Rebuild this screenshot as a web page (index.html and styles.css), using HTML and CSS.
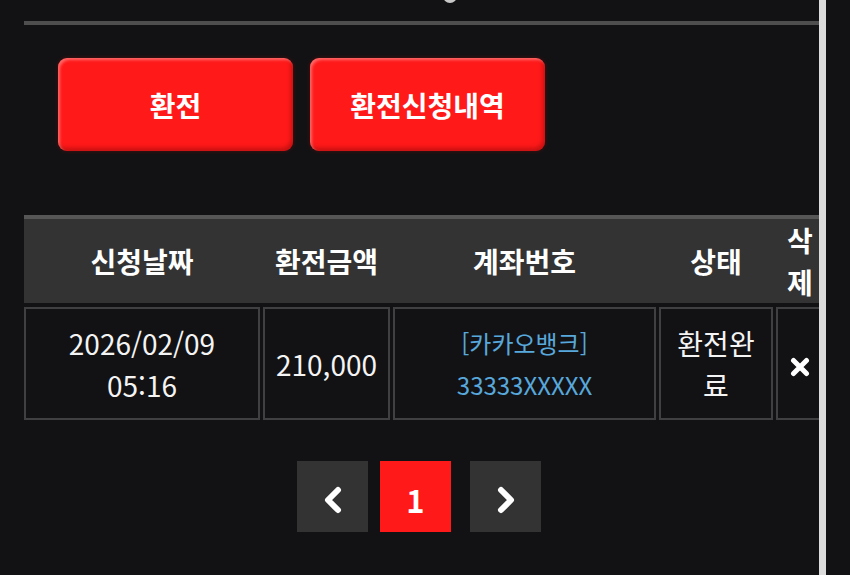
FILE: index.html
```html
<!DOCTYPE html>
<html lang="ko">
<head>
  <meta charset="UTF-8" />
  <meta name="viewport" content="width=device-width, initial-scale=1.0"/>
  <title>환전신청내역</title>
  <link rel="stylesheet" href="styles.css">
</head>
<body>

  <div class="panel">
    <div class="top-icon"></div>
    <div class="rule"></div>

    <div class="tabs">
      <button class="tab">환전</button>
      <button class="tab">환전신청내역</button>
    </div>

    <div class="history">
      <div class="row head">
        <div class="cell">신청날짜</div>
        <div class="cell">환전금액</div>
        <div class="cell">계좌번호</div>
        <div class="cell">상태</div>
        <div class="cell">삭제</div>
      </div>
      <div class="row body">
        <div class="cell">2026/02/09<br>05:16</div>
        <div class="cell">210,000</div>
        <div class="cell account">[카카오뱅크]<br>33333XXXXX</div>
        <div class="cell">환전완료</div>
        <div class="cell del">
          <svg width="20" height="20" viewBox="0 0 20 20">
            <path d="M3.5 3.5 L16.5 16.5 M16.5 3.5 L3.5 16.5" stroke="#fff" stroke-width="5" stroke-linecap="round"/>
          </svg>
        </div>
      </div>
    </div>

    <div class="pager">
      <a class="page">
        <svg width="22" height="28" viewBox="0 0 22 28">
          <polyline points="16,4 6,14 16,24" fill="none" stroke="#fff" stroke-width="6" stroke-linejoin="round" stroke-linecap="round"/>
        </svg>
      </a>
      <a class="page current">1</a>
      <a class="page next">
        <svg width="22" height="28" viewBox="0 0 22 28">
          <polyline points="6,4 16,14 6,24" fill="none" stroke="#fff" stroke-width="6" stroke-linejoin="round" stroke-linecap="round"/>
        </svg>
      </a>
    </div>
  </div>

  <div class="edge"></div>

</body>
</html>
```

FILE: styles.css
```css
body {
  margin: 0;
  background: #121214;
  font-family: "Noto Sans CJK KR", "Noto Sans", sans-serif;
  color: #fff;
  display: flex;
  height: 575px;
  overflow: hidden;
}
.panel {
  width: 819px;
  flex: none;
  overflow: hidden;
}
.edge {
  width: 7px;
  flex: none;
  background: #dcdcdc;
}
.top-icon {
  width: 14px;
  height: 14px;
  border-radius: 50%;
  background: #c8c8c8;
  margin: -11px 0 0 443px;
}
.rule {
  height: 4px;
  background: #4e4e4e;
  margin: 18px 0 0 24px;
}
.tabs {
  display: flex;
  gap: 17px;
  padding: 33px 0 0 58px;
}
.tab {
  width: 235px;
  height: 93px;
  border: none;
  border-radius: 9px;
  background: #ff1919;
  color: #fff;
  font-family: inherit;
  font-size: 28px;
  font-weight: 700;
  box-shadow: inset 2px 2px 3px rgba(255,255,255,0.35), inset -2px -3px 4px rgba(90,0,0,0.35), 0 0 4px rgba(255,0,0,0.25);
  cursor: pointer;
}
.history {
  margin: 64px 0 0 24px;
  width: 800px;
}
.row {
  display: grid;
  grid-template-columns: 236px 127px 263px 114px 48px;
  column-gap: 3px;
}
.head {
  border-top: 4px solid #565656;
  background: #333334;
  height: 84px;
  font-size: 28px;
  font-weight: 700;
  line-height: 42px;
}
.head .cell {
  display: flex;
  align-items: center;
  justify-content: center;
  text-align: center;
  word-break: break-all;
}
.body {
  margin-top: 4px;
  font-size: 28px;
  line-height: 42px;
}
.body .cell {
  box-sizing: border-box;
  border: 2px solid #404042;
  height: 113px;
  display: flex;
  align-items: center;
  justify-content: center;
  text-align: center;
  padding: 0 6px;
  word-break: break-all;
  color: #f4f4f4;
}
.body .account {
  font-size: 24px;
  color: #58a8dc;
}
.body .del {
  padding-top: 6px;
}
.pager {
  display: flex;
  gap: 12px;
  padding: 41px 0 0 297px;
}
.page {
  width: 71px;
  height: 71px;
  box-sizing: border-box;
  padding-top: 6px;
  background: #333334;
  display: flex;
  align-items: center;
  justify-content: center;
  font-size: 31px;
  font-weight: 700;
  color: #fff;
}
.page.current {
  background: #ff1919;
}
.page.next {
  margin-left: 7px;
}
```
